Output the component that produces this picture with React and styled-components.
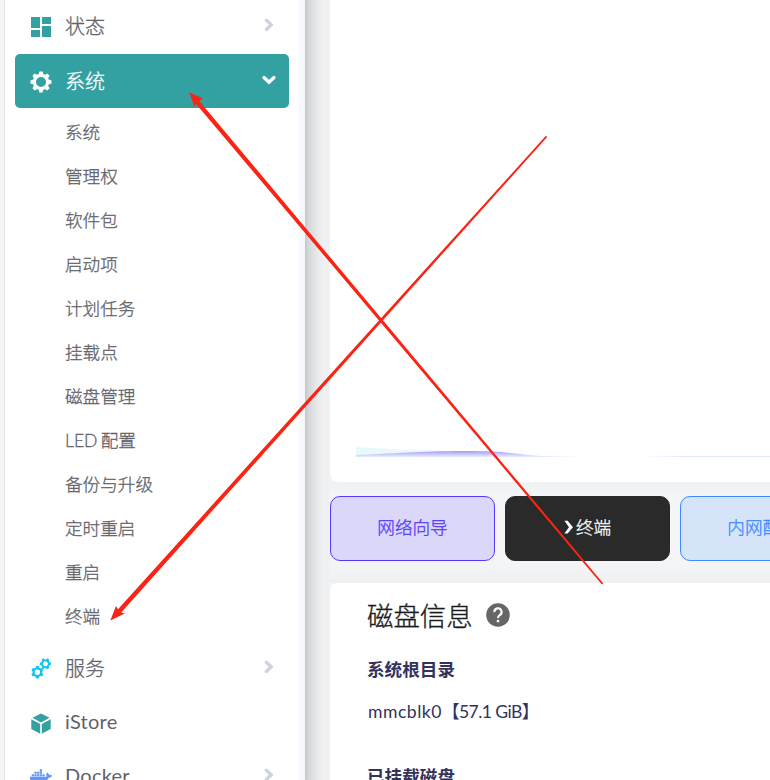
import React from 'react';
import styled, { createGlobalStyle, css } from 'styled-components';
import { FaDocker } from 'react-icons/fa';

const GlobalStyle = createGlobalStyle`
  * { box-sizing: border-box; }
  body {
    margin: 0;
    overflow: hidden;
    font-family: Lato, 'Noto Sans CJK SC', sans-serif;
    font-weight: 300;
  }
`;

const Page = styled.div`
  position: relative;
  display: flex;
  width: 770px;
  height: 780px;
  overflow: hidden;
  background: #f4f5f7;
`;

const Edge = styled.div`
  flex: 0 0 5px;
  background: #f5f5f5;
  border-right: 1px solid #e4e4e4;
`;

const Sidebar = styled.nav`
  flex: 0 0 300px;
  height: 780px;
  padding: 0 10px;
  overflow: hidden;
  background: #fff;
  border-right: 6px solid #f5f8fc;
`;

const SidebarShadow = styled.div`
  flex: 0 0 25px;
  background: linear-gradient(90deg, #c6c7c9 0, #d3d4d6 3px, #e0e1e3 8px, #e9eaec 13px, #eff0f2 18px, #f0f1f3 25px);
`;

const MenuItem = styled.div`
  display: flex;
  align-items: center;
  height: 54px;
  width: 274px;
  padding: 0 12px 0 14px;
  border-radius: 5px;
  font-size: 20px;
  color: #5f6368;
  ${(p) => p.$active && css`
    background: #33a1a2;
    color: #fff;
  `}
  ${(p) => p.$first && css`
    height: 51px;
    margin-bottom: 3px;
  `}
`;

const MenuIcon = styled.span`
  display: flex;
  flex: 0 0 24px;
  justify-content: center;
  margin-right: 12px;
  padding-top: 2px;
`;

const MenuLabel = styled.span`
  flex: 1;
  line-height: 30px;
  -webkit-text-stroke: 0.3px currentColor;
  ${(p) => p.$latin && css`
    padding-bottom: 2px;
    font-weight: 400;
    letter-spacing: 0.25px;
    -webkit-text-stroke: 0;
  `}
`;

const SubMenu = styled.ul`
  list-style: none;
  margin: 0;
  padding: 3px 0 2px 50px;
`;

const SubItem = styled.li`
  height: 44px;
  line-height: 44px;
  font-size: 17.6px;
  word-spacing: -1.5px;
  color: #5f6368;
  -webkit-text-stroke: 0.3px currentColor;
`;

const Main = styled.main`
  flex: 0 0 440px;
  height: 780px;
  overflow: hidden;
`;

const ChartCard = styled.section`
  display: flex;
  align-items: flex-end;
  height: 482px;
  padding: 0 0 24px 26px;
  background: #fff;
  border-radius: 0 0 0 8px;
`;

const ButtonRow = styled.div`
  display: flex;
  gap: 10px;
  height: 101px;
  padding: 14px 0 22px;
  background: linear-gradient(#f0f1f3, #f4f5f7 14%, #f4f5f7 80%, #eff0f2);
`;

const tones = {
  violet: css`background: #dbd7f8; border-color: #553afe; color: #553afe;`,
  dark: css`background: #2a2a2a; border-color: #2a2a2a; color: #fff;`,
  blue: css`background: #d6e4fa; border-color: #3d8bff; color: #3d8bff;`,
};

const ActionButton = styled.button`
  display: flex;
  flex: 0 0 165px;
  align-items: center;
  justify-content: center;
  gap: 2px;
  padding: 0 0 4px;
  border: 1px solid;
  border-radius: 10px;
  font: inherit;
  font-size: 17.6px;
  -webkit-text-stroke: 0.3px currentColor;
  ${(p) => tones[p.$tone]}
`;

const DiskCard = styled.section`
  height: 240px;
  padding: 14px 0 0 37px;
  background: #fff;
  border-radius: 8px 0 0 0;
`;

const DiskHeader = styled.header`
  display: flex;
  align-items: center;
  gap: 13px;
  height: 36px;
`;

const DiskTitle = styled.h2`
  margin: 2px 0 0;
  font-size: 26.4px;
  line-height: 36px;
  font-weight: 300;
  color: #1c1c1c;
  -webkit-text-stroke: 0.35px currentColor;
`;

const DiskLabel = styled.h3`
  margin: ${(p) => p.$top} 0 0;
  font-size: 17.6px;
  line-height: 26px;
  font-weight: 700;
  color: #32325d;
`;

const DiskValue = styled.p`
  display: flex;
  margin: 16px 0 0;
  font-size: 17.6px;
  line-height: 26px;
  font-weight: 400;
  color: #32325d;
`;

const DiskName = styled.span`
  width: 75px;
  padding-left: 1px;
  white-space: nowrap;
  letter-spacing: 0.5px;
`;

const DiskSize = styled.span`
  white-space: nowrap;
  letter-spacing: -0.6px;
`;

const Overlay = styled.svg`
  position: absolute;
  top: 0;
  left: 0;
  pointer-events: none;
`;

const DashboardIcon = () => (
  <svg width="22" height="22" viewBox="0 0 22 22" fill="#33a1a2">
    <path d="M1 1h9v11H1zM12 1h9v7h-9zM1 14h9v7H1zM12 10h9v11h-9z" />
  </svg>
);

const GearIcon = () => (
  <svg width="22" height="22" viewBox="0 0 22 22">
    <g transform="translate(11 11)">
      <circle r="6.6" fill="none" stroke="currentColor" strokeWidth="3.2" />
      {[0, 45, 90, 135, 180, 225, 270, 315].map((a) => (
        <path key={a} d="M-2.4-7.6-1.6-10.5H1.6L2.4-7.6Z" transform={`rotate(${a})`} fill="currentColor" />
      ))}
    </g>
  </svg>
);

const SmallCog = ({ x, y, scale, turn }) => (
  <g transform={`translate(${x} ${y}) scale(${scale}) rotate(${turn})`}>
    <circle r="3.8" fill="none" stroke="currentColor" strokeWidth="2.2" />
    {[0, 60, 120, 180, 240, 300].map((a) => (
      <path key={a} d="M-1.7-4-1.4-6.2H1.4L1.7-4Z" transform={`rotate(${a})`} fill="currentColor" />
    ))}
  </g>
);

const ServicesIcon = () => (
  <svg width="22" height="22" viewBox="0 0 22 22" color="#13c5ee">
    <SmallCog x={7.4} y={14.3} scale={1} turn={0} />
    <SmallCog x={15.4} y={5.8} scale={0.9} turn={30} />
  </svg>
);

const CubeIcon = () => (
  <svg width="22" height="22" viewBox="0 0 22 22" fill="#33a1a2">
    <path d="M11 1.6 19.6 5.8 11 10.4 2.4 5.8Z" />
    <path d="M1.3 7.2 10.2 12V21.8L1.3 17Z" />
    <path d="M20.7 7.2 11.8 12V21.8L20.7 17Z" />
  </svg>
);

const ChevronRight = () => (
  <svg width="16" height="16" viewBox="0 0 16 16" fill="none" stroke="#ced4da" strokeWidth="3.4">
    <path d="M5.4 2.2 10.2 6.8 5.4 11.4" strokeLinecap="round" />
  </svg>
);

const ChevronDown = () => (
  <svg width="16" height="16" viewBox="0 0 16 16" fill="none" stroke="#fff" strokeWidth="3.4">
    <path d="M3 4.6 8 9.2 13 4.6" strokeLinecap="round" />
  </svg>
);

const PromptIcon = () => (
  <svg width="10" height="16" viewBox="0 0 10 16">
    <path d="M0.4 1.8H3.6L9 8.2 3.6 14.6H0.4L5 8.2Z" fill="#fff" />
  </svg>
);

const HelpIcon = () => (
  <svg width="24" height="24" viewBox="0 0 24 24">
    <circle cx="12" cy="12" r="11.8" fill="#666" />
    <path d="M8.4 9.2A3.6 3.6 0 1 1 13.8 12C12.6 12.8 12 13.3 12 15" fill="none" stroke="#fff" strokeWidth="2.1" />
    <rect x="10.8" y="16.8" width="2.4" height="2.4" fill="#fff" />
  </svg>
);

const TrafficChart = () => (
  <svg width="414" height="12" viewBox="0 0 414 12">
    <defs>
      <linearGradient id="traffic" x1="0" y1="0" x2="0" y2="1">
        <stop offset="0" stopColor="#a899f4" />
        <stop offset="1" stopColor="#e5e7fd" />
      </linearGradient>
      <linearGradient id="baseline" gradientUnits="userSpaceOnUse" x1="0" y1="0" x2="414" y2="0">
        <stop offset="0" stopColor="#dfe7ff" />
        <stop offset=".44" stopColor="#dfe7ff" />
        <stop offset=".54" stopColor="#ffffff" />
        <stop offset=".69" stopColor="#ffffff" />
        <stop offset=".8" stopColor="#dfe7ff" />
        <stop offset="1" stopColor="#dfe7ff" />
      </linearGradient>
    </defs>
    <path d="M0 1C30 3 65 4 95 5V10H0Z" fill="#e9f8fd" />
    <path d="M0 9C45 7 75 5 110 5C158 5 160 9 195 10.4H0Z" fill="url(#traffic)" />
    <path d="M0 10H414V11H0Z" fill="url(#baseline)" />
  </svg>
);

const subItems = ['系统', '管理权', '软件包', '启动项', '计划任务', '挂载点', '磁盘管理', 'LED 配置', '备份与升级', '定时重启', '重启', '终端'];

function Item({ icon, label, active, first, chevron, latin }) {
  return (
    <MenuItem $active={active} $first={first}>
      <MenuIcon>{icon}</MenuIcon>
      <MenuLabel $latin={latin}>{label}</MenuLabel>
      {chevron}
    </MenuItem>
  );
}

export default function App() {
  return (
    <>
      <GlobalStyle />
      <Page>
        <Edge />
        <Sidebar>
          <Item icon={<DashboardIcon />} label="状态" first chevron={<ChevronRight />} />
          <Item icon={<GearIcon />} label="系统" active chevron={<ChevronDown />} />
          <SubMenu>
            {subItems.map((name) => <SubItem key={name}>{name}</SubItem>)}
          </SubMenu>
          <Item icon={<ServicesIcon />} label="服务" chevron={<ChevronRight />} />
          <Item icon={<CubeIcon />} label="iStore" latin />
          <Item icon={<FaDocker size={22} color="#6296f8" />} label="Docker" latin chevron={<ChevronRight />} />
        </Sidebar>
        <SidebarShadow />
        <Main>
          <ChartCard><TrafficChart /></ChartCard>
          <ButtonRow>
            <ActionButton $tone="violet">网络向导</ActionButton>
            <ActionButton $tone="dark"><PromptIcon />终端</ActionButton>
            <ActionButton $tone="blue">内网配置</ActionButton>
          </ButtonRow>
          <DiskCard>
            <DiskHeader>
              <DiskTitle>磁盘信息</DiskTitle>
              <HelpIcon />
            </DiskHeader>
            <DiskLabel $top="24px">系统根目录</DiskLabel>
            <DiskValue><DiskName>mmcblk0</DiskName><DiskSize>【57.1 GiB】</DiskSize></DiskValue>
            <DiskLabel $top="39px">已挂载磁盘</DiskLabel>
          </DiskCard>
        </Main>
        <Overlay width="770" height="780" viewBox="0 0 770 780" fill="#fb2314">
          <path d="M189.2 92.2 202.8 98.6 199.3 101 603.3 583.4 601.9 584.4 195.9 103.8 194.6 107.2Z" />
          <path d="M110.3 620.5 116 606 118 609.3 545.9 135.8 547.2 136.9 121.2 612.4 124.8 613.6Z" />
        </Overlay>
      </Page>
    </>
  );
}
